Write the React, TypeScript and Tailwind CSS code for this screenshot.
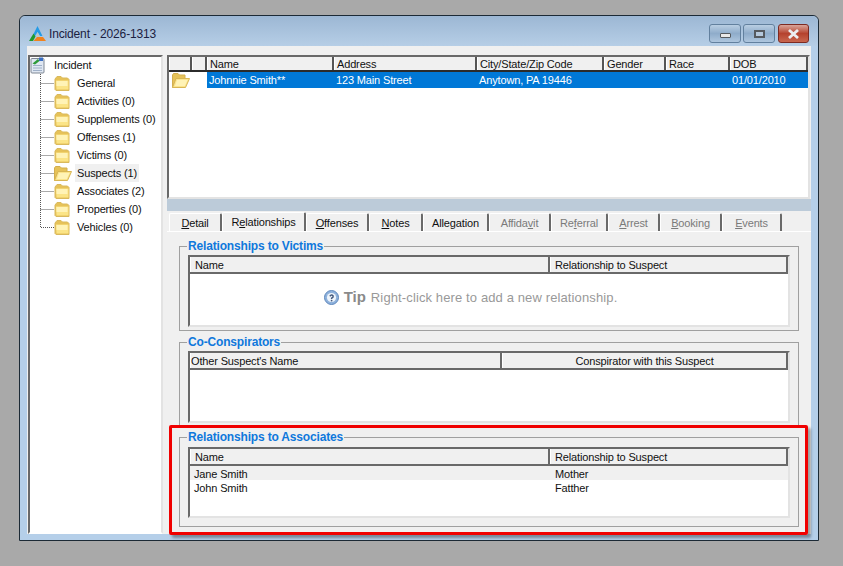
import React from 'react';

const treeItems = [
  { label: 'General' },
  { label: 'Activities (0)' },
  { label: 'Supplements (0)' },
  { label: 'Offenses (1)' },
  { label: 'Victims (0)' },
  { label: 'Suspects (1)', open: true },
  { label: 'Associates (2)' },
  { label: 'Properties (0)' },
  { label: 'Vehicles (0)' },
];

const topColumns = [
  { label: '', width: 'w-[23px]' },
  { label: '', width: 'w-[15px]' },
  { label: 'Name', width: 'w-[127px]' },
  { label: 'Address', width: 'w-[143px]' },
  { label: 'City/State/Zip Code', width: 'w-[127px]' },
  { label: 'Gender', width: 'w-[62px]' },
  { label: 'Race', width: 'w-[64px]' },
  { label: 'DOB', width: 'w-[78px]' },
];

const tabs = [
  { pre: '', key: 'D', post: 'etail', width: 'w-[53px]' },
  { pre: 'R', key: 'e', post: 'lationships', width: 'w-[84px]', active: true },
  { pre: '', key: 'O', post: 'ffenses', width: 'w-[63px]' },
  { pre: '', key: 'N', post: 'otes', width: 'w-[54px]' },
  { pre: 'Allegation', key: '', post: '', width: 'w-[66px]' },
  { pre: 'Affida', key: 'v', post: 'it', width: 'w-[62px]', disabled: true },
  { pre: 'Re', key: 'f', post: 'erral', width: 'w-[57px]', disabled: true },
  { pre: '', key: 'A', post: 'rrest', width: 'w-[52px]', disabled: true },
  { pre: '', key: 'B', post: 'ooking', width: 'w-[62px]', disabled: true },
  { pre: '', key: 'E', post: 'vents', width: 'w-[60px]', disabled: true },
];

const Folder = ({ open }: { open?: boolean }) =>
  open ? (
    <svg width="20" height="17" viewBox="0 0 20 17" className="-mr-[2px] -ml-[2px] shrink-0">
      <path d="M2.5 3 L3.5 1.5 H8 L9.5 3 H15 V7 H6 L2.5 15.5 Z" fill="#e6c258" stroke="#d2ae4e" />
      <path d="M6 6.5 H19.5 L15.5 15.5 H2.5 Z" fill="#fbe48c" stroke="#d8b655" />
      <path d="M7 8 H17.5 L14.8 14 H5 Z" fill="#fff3b6" />
    </svg>
  ) : (
    <svg width="16" height="17" viewBox="0 0 16 17" className="shrink-0">
      <path d="M1 4 L3 1.5 H7 L8.5 3 H13.5 L15 4.5 V15.5 H2 L1 14.5 Z" fill="#e6c258" stroke="#d9b95d" />
      <path d="M2 5.5 H14.5 V14.5 H2.5 Z" fill="#fbe486" />
      <path d="M2.5 6 H13.5 V11 H2.5 Z" fill="#fff3b6" />
    </svg>
  );

const Connector = ({ last }: { last?: boolean }) => (
  <svg width="14" height="18" viewBox="0 0 14 18" className="shrink-0">
    <path
      d={last ? 'M0.5 0 V9.5 H14' : 'M0.5 0 V18 M0.5 9.5 H14'}
      fill="none"
      stroke="#555"
      strokeWidth="1"
      strokeDasharray="1 1"
    />
  </svg>
);

const GroupBox = ({
  title,
  className,
  children,
}: {
  title: string;
  className: string;
  children: React.ReactNode;
}) => (
  <fieldset className={`${className} mx-[12px] min-w-0 border border-[#a0a0a0] px-[8px]`}>
    <legend className="-ml-px h-[14px] px-[1px] text-[12px] leading-[14px] font-bold tracking-[-0.17px] text-[#0f78dc]">
      {title}
    </legend>
    {children}
  </fieldset>
);

const SubGrid = ({
  columns,
  center,
  height,
  children,
}: {
  columns: { label: string; width: string; center?: boolean; pad: string }[];
  center?: boolean;
  height: string;
  children?: React.ReactNode;
}) => (
  <div
    className={`${height} flex flex-col border-2 border-t-[#696969] border-r-[#e3e3e3] border-b-[#e3e3e3] border-l-[#696969] bg-white`}
  >
    <div className="box-content flex h-[15px] shrink-0 border-b-2 border-b-[#696969]">
      {columns.map((col) => (
        <div
          key={col.label}
          className={`${col.width} ${col.pad} ${col.center ? 'text-center' : ''} h-full truncate border-r-2 border-l border-r-[#696969] border-l-white bg-[#f0f0f0] leading-[17px]`}
        >
          {col.label}
        </div>
      ))}
    </div>
    <div className={`flex-1 ${center ? 'flex items-center justify-center' : ''}`}>{children}</div>
  </div>
);

const relationColumns = [
  { label: 'Name', width: 'w-[360px]', pad: 'pl-[4px]' },
  { label: 'Relationship to Suspect', width: 'w-[238px]', pad: 'pl-[4px]' },
];

const conspiratorColumns = [
  { label: "Other Suspect's Name", width: 'w-[312px]', pad: 'pl-0' },
  { label: 'Conspirator with this Suspect', width: 'w-[286px]', center: true, pad: 'pl-0' },
];

const App = () => {
  return (
    <div
      className="relative h-[566px] w-[843px] overflow-hidden bg-[#a9a9a9] pt-[15px] pl-[19px] text-[11px] tracking-[-0.15px] text-[#111]"
      style={{ fontFamily: '"Liberation Sans", Arial, sans-serif' }}
    >
      <div className="flex h-[526px] w-[800px] flex-col rounded-t-[6px] border border-[#1c2a36] bg-[#b5cfe9] px-[7px] pb-[6px]">
        {/* title bar */}
        <div className="-mx-[7px] flex h-[30px] shrink-0 items-center rounded-t-[6px] bg-gradient-to-b from-[#9cb7d4] to-[#b6cee6] pt-[5px] pr-[9px] pl-[9px]">
          <svg width="17" height="15" viewBox="0 0 17 15" className="shrink-0">
            <path d="M8.5 0 L13.5 10 L11 10 L8.5 6 L6 10 L5 10 L4.5 8 Z" fill="#259be6" />
            <path d="M4.5 7.5 L6.5 10.5 L4 15 H0 Z" fill="#1f9a30" />
            <path d="M4.5 15 L8 11 H14 L17 15 Z" fill="#f0821e" />
            <path d="M8.5 6 L11 10.5 L7 11 Z" fill="#b9c7c9" />
          </svg>
          <span className="ml-[3px] text-[12px] text-[#1b2140]">Incident - 2026-1313</span>
          <div className="ml-auto flex items-center">
            <div className="flex h-[19px] w-[32px] items-center justify-center rounded-[3px] border border-[#62809e] bg-gradient-to-b from-[#b9cee3] via-[#8facca] to-[#aec6de]">
              <div className="mt-[4px] h-[5px] w-[11px] rounded-[1px] border border-[#55595e] bg-[#e8e8e8]" />
            </div>
            <div className="ml-[2px] flex h-[19px] w-[32px] items-center justify-center rounded-[3px] border border-[#62809e] bg-gradient-to-b from-[#b9cee3] via-[#8facca] to-[#aec6de]">
              <div className="h-[8px] w-[11px] border-2 border-[#55595e] bg-[#b5c8dc]" />
            </div>
            <div className="ml-[3px] flex h-[19px] w-[31px] items-center justify-center rounded-[3px] border border-[#7d2a22] bg-gradient-to-b from-[#d8a49a] via-[#b5422e] to-[#c8664e]">
              <svg width="13" height="10" viewBox="0 0 13 10">
                <path d="M2 1 L11 9 M11 1 L2 9" stroke="#eceff2" strokeWidth="2.8" />
              </svg>
            </div>
          </div>
        </div>

        {/* client area */}
        <div className="flex min-h-0 flex-1 bg-[#f0f0f0] pt-[9px]">
          {/* tree */}
          <div className="ml-[1px] h-full w-[135px] shrink-0 border-2 border-t-[#696969] border-r-[#e3e3e3] border-b-transparent border-l-[#696969] bg-white">
            <div className="flex h-[17px] items-center">
              <svg width="16" height="17" viewBox="0 0 16 17" className="shrink-0">
                <rect x="1" y="1.5" width="13" height="14.5" rx="1" fill="#dfe7f2" stroke="#7f8794" />
                <path d="M3 8.5 H12 M3 11 H12 M3 13.5 H12" stroke="#9fb0c8" />
                <path d="M2.5 6.5 L8 2 L9.5 4 L5 7.5 Z" fill="#2c9a38" />
                <path d="M9 0.5 H13 V4 H9 Z" fill="#3a6fc4" />
              </svg>
              <span className="ml-[8px]">Incident</span>
            </div>
            {treeItems.map((item, index) => (
              <div key={item.label} className="flex h-[18px] items-center pl-[10px]">
                <Connector last={index === treeItems.length - 1} />
                <Folder open={item.open} />
                <span className={`ml-[5px] px-[2px] leading-[18px] whitespace-nowrap ${item.open ? 'bg-[#f0f0f0]' : ''}`}>
                  {item.label}
                </span>
              </div>
            ))}
          </div>

          {/* right side */}
          <div className="ml-[4px] flex min-w-0 flex-1 flex-col">
            <div className="h-[144px] w-[643px] shrink-0 border-2 border-t-[#696969] border-r-[#e3e3e3] border-b-[#e3e3e3] border-l-[#696969] bg-white">
              <div className="box-content flex h-[13px] border-b-2 border-b-[#2b2b2b]">
                {topColumns.map((col, index) => (
                  <div
                    key={index}
                    className={`${col.width} h-full shrink-0 truncate border-r-2 border-l border-r-[#555] border-l-white bg-[#f0f0f0] pl-[2px] leading-[15px]`}
                  >
                    {col.label}
                  </div>
                ))}
              </div>
              <div className="flex h-[16px] items-center">
                <div className="flex w-[38px] shrink-0 items-center pl-[3px]">
                  <Folder open />
                </div>
                <div className="flex h-full flex-1 items-center bg-[#0078d7] text-white">
                  <span className="w-[127px] pl-[2px]">Johnnie Smith**</span>
                  <span className="w-[143px] pl-[2px]">123 Main Street</span>
                  <span className="w-[253px] pl-[2px]">Anytown, PA 19446</span>
                  <span className="pl-[2px]">01/01/2010</span>
                </div>
              </div>
            </div>
            <div className="h-[12px] shrink-0 bg-[#bccbd9]" />

            {/* tabs */}
            <div className="flex h-[21px] shrink-0 items-end border-b border-b-white pl-[2px]">
              {tabs.map((tab) => (
                <div
                  key={tab.width + tab.post + tab.pre}
                  className={`${tab.width} ${tab.active ? 'h-[19px]' : 'h-[18px] pt-[1px]'} ${tab.disabled ? 'text-[#7a7a7a]' : ''} flex shrink-0 items-center justify-center rounded-t-[2px] border-t border-r-2 border-l border-t-white border-r-[#696969] border-l-white whitespace-nowrap`}
                >
                  {tab.pre}
                  {tab.key && <u>{tab.key}</u>}
                  {tab.post}
                </div>
              ))}
            </div>

            {/* tab page */}
            <div className="flex min-h-0 flex-1 flex-col pt-[7px]">
              <GroupBox title="Relationships to Victims" className="h-[92px]">
                <div className="pt-[2px]">
                  <SubGrid columns={relationColumns} height="h-[72px]" center>
                    <div className="mb-[4px] flex items-center pr-[37px] tracking-normal text-[#8a8a8a]">
                      <svg width="15" height="15" viewBox="0 0 15 15" className="shrink-0">
                        <circle cx="7.5" cy="7.5" r="7" fill="#8fb2dc" stroke="#5f88bd" />
                        <circle cx="7.5" cy="7.5" r="4.6" fill="#eef4fb" />
                        <path d="M5.8 6.2 Q7.5 4 9.2 6 Q9.4 7.4 7.6 8.2 V9" fill="none" stroke="#44597c" strokeWidth="1.4" />
                        <circle cx="7.6" cy="10.6" r="0.9" fill="#44597c" />
                      </svg>
                      <span className="ml-[5px] text-[15px] font-bold">Tip</span>
                      <span className="ml-[5px] text-[13px] tracking-[0.12px] text-[#999]">
                        Right-click here to add a new relationship.
                      </span>
                    </div>
                  </SubGrid>
                </div>
              </GroupBox>
              <GroupBox title="Co-Conspirators" className="mt-[4px] h-[92px]">
                <div className="pt-[2px]">
                  <SubGrid columns={conspiratorColumns} height="h-[72px]" />
                </div>
              </GroupBox>
              <GroupBox title="Relationships to Associates" className="mt-[3px] h-[97px]">
                <div className="pt-[3px]">
                  <SubGrid columns={relationColumns} height="h-[71px]">
                    <div className="flex h-[14px] bg-[#f0f0f0] leading-[16px]">
                      <span className="w-[360px] pl-[4px]">Jane Smith</span>
                      <span className="pl-[5px]">Mother</span>
                    </div>
                    <div className="flex h-[14px] leading-[16px]">
                      <span className="w-[360px] pl-[4px]">John Smith</span>
                      <span className="pl-[5px]">Fatther</span>
                    </div>
                  </SubGrid>
                </div>
              </GroupBox>
            </div>
          </div>
        </div>
      </div>

      {/* red annotation box */}
      <div className="absolute top-[425px] left-[169px] h-[110px] w-[639px] rounded-[2px] border-[3px] border-[#f00000] shadow-[3px_3px_3px_rgba(0,0,0,0.35)]" />
    </div>
  );
};

export default App;
